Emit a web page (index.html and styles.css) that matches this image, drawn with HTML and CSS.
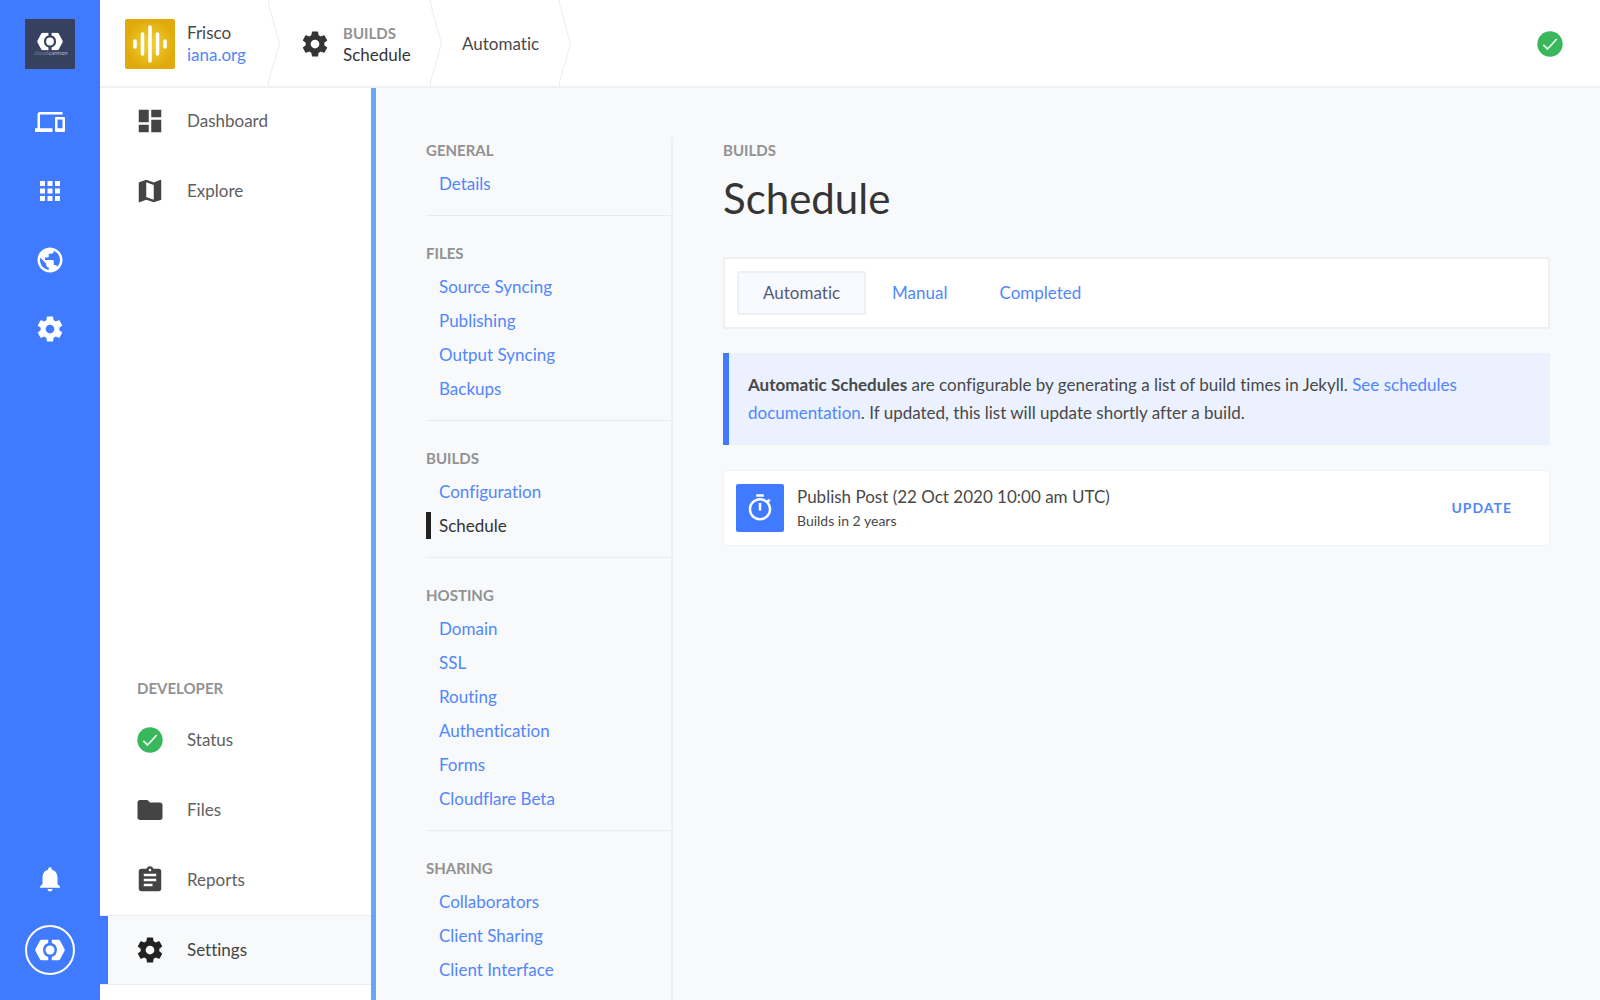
FILE: index.html
```html
<!DOCTYPE html>
<html lang="en">
<head>
<meta charset="utf-8">
<title>Schedule</title>
<link rel="stylesheet" href="styles.css">
</head>
<body>
<svg class="defs" aria-hidden="true">
  <symbol id="gear" viewBox="0 0 24 24"><path d="M19.43 12.98c.04-.32.07-.64.07-.98s-.03-.66-.07-.98l2.11-1.65c.19-.15.24-.42.12-.64l-2-3.46c-.12-.22-.39-.3-.61-.22l-2.49 1c-.52-.4-1.08-.73-1.69-.98l-.38-2.65C14.46 2.18 14.25 2 14 2h-4c-.25 0-.46.18-.49.42l-.38 2.65c-.61.25-1.17.59-1.69.98l-2.49-1c-.23-.09-.49 0-.61.22l-2 3.46c-.13.22-.07.49.12.64l2.11 1.65c-.04.32-.07.65-.07.98s.03.66.07.98l-2.11 1.65c-.19.15-.24.42-.12.64l2 3.46c.12.22.39.3.61.22l2.49-1c.52.4 1.08.73 1.69.98l.38 2.65c.03.24.24.42.49.42h4c.25 0 .46-.18.49-.42l.38-2.65c.61-.25 1.17-.59 1.69-.98l2.49 1c.23.09.49 0 .61-.22l2-3.46c.12-.22.07-.49-.12-.64l-2.11-1.65zM12 15.5c-1.93 0-3.5-1.57-3.5-3.5s1.57-3.5 3.5-3.5 3.5 1.57 3.5 3.5-1.57 3.5-3.5 3.5z"/></symbol>
  <symbol id="check" viewBox="0 0 30 30"><circle cx="15" cy="15" r="12.7" fill="#3ab75c"/><path d="M8.3 15.8l4.2 4.2 9.3-10" fill="none" stroke="#e4f7e8" stroke-width="1.8"/></symbol>
  <symbol id="cannon" viewBox="0 0 50 34"><path d="M11 0h11v5.500a12 12 0 0 0 0 23V34H11q-2 0-3-2L1 19q-1-2 0-4L8 2q1-2 3-2zM39 0H28v5.500a12 12 0 0 1 0 23V34h11q2 0 3-2l7-13q1-2 0-4L42 2q-1-2-3-2z"/><circle cx="25" cy="17" r="7.500"/></symbol>
</svg>
<div class="app">
  <nav class="rail" aria-label="Main">
    <a class="org" href="#" aria-label="Organisation">
      <svg viewBox="0 0 50 50"><use href="#cannon" x="12" y="13.500" width="26" height="18" fill="#fff"/><text x="9" y="36" font-size="6">cloud<tspan>cannon</tspan></text></svg>
    </a>
    <div class="rail-links">
      <a href="#" aria-label="Sites"><svg viewBox="0 0 24 24"><path d="M4 6h18V4H4c-1.100 0-2 .9-2 2v11H0v3h14v-3H4V6zm19 2h-6c-.55 0-1 .45-1 1v10c0 .55.45 1 1 1h6c.55 0 1-.45 1-1V9c0-.55-.45-1-1-1zm-1 9h-4v-7h4v7z"/></svg></a>
      <a href="#" aria-label="Apps"><svg viewBox="0 0 24 24"><path d="M4 8h4V4H4v4zm6 12h4v-4h-4v4zm-6 0h4v-4H4v4zm0-6h4v-4H4v4zm6 0h4v-4h-4v4zm6-10v4h4V4h-4zm-6 4h4V4h-4v4zm6 6h4v-4h-4v4zm0 6h4v-4h-4v4z"/></svg></a>
      <a href="#" aria-label="Domains"><svg viewBox="0 0 24 24"><path d="M12 2C6.480 2 2 6.480 2 12s4.480 10 10 10 10-4.480 10-10S17.520 2 12 2zm-1 17.930c-3.950-.49-7-3.850-7-7.930 0-.62.08-1.210.21-1.790L9 15v1c0 1.100.9 2 2 2v1.930zm6.900-2.540c-.26-.81-1-1.390-1.900-1.390h-1v-3c0-.55-.45-1-1-1H8v-2h2c.55 0 1-.45 1-1V7h2c1.100 0 2-.9 2-2v-.41c2.930 1.190 5 4.060 5 7.410 0 2.080-.8 3.970-2.100 5.390z"/></svg></a>
      <a href="#" aria-label="Preferences"><svg><use href="#gear"/></svg></a>
    </div>
    <div class="rail-foot">
      <a href="#" aria-label="Notifications"><svg viewBox="0 0 24 24"><path d="M12 22c1.100 0 2-.9 2-2h-4c0 1.100.89 2 2 2zm6-6v-5c0-3.070-1.640-5.640-4.500-6.320V4c0-.83-.67-1.500-1.500-1.500s-1.500.67-1.500 1.500v.68C7.630 5.360 6 7.920 6 11v5l-2 2v1h16v-1l-2-2z"/></svg></a>
      <a class="avatar" href="#" aria-label="Account"><svg><use href="#cannon"/></svg></a>
    </div>
  </nav>
  <header class="topbar">
    <div class="crumb site">
      <svg class="site-logo" viewBox="0 0 50 50"><defs><radialGradient id="gold"><stop offset="0" stop-color="#f2d233"/><stop offset="1" stop-color="#e0aa0c"/></radialGradient></defs><rect width="50" height="50" rx="2" fill="url(#gold)"/><path d="M10 22v6M17.500 15v20M25 8v34M32.500 15v20M40 22v6" stroke="#fff" stroke-width="3.600" stroke-linecap="round"/></svg>
      <div class="crumb-text"><span>Frisco</span><a href="#">iana.org</a></div>
    </div>
    <svg class="chevron" viewBox="0 0 12 86"><path d="M.5 0v4L11.500 43.500.5 82v4"/></svg>
    <div class="crumb section">
      <svg class="icon"><use href="#gear"/></svg>
      <div class="crumb-text"><span class="label">Builds</span><span>Schedule</span></div>
    </div>
    <svg class="chevron" viewBox="0 0 12 86"><path d="M.5 0v4L11.500 43.500.5 82v4"/></svg>
    <div class="crumb leaf">Automatic</div>
    <svg class="chevron" viewBox="0 0 12 86"><path d="M.5 0v4L11.500 43.500.5 82v4"/></svg>
    <svg class="icon state"><use href="#check"/></svg>
  </header>
  <nav class="side" aria-label="Site">
    <div class="side-top">
      <a href="#"><svg class="icon" viewBox="0 0 24 24"><path d="M3 13h8V3H3v10zm0 8h8v-6H3v6zm10 0h8V11h-8v10zm0-18v6h8V3h-8z"/></svg>Dashboard</a>
      <a href="#"><svg class="icon" viewBox="0 0 24 24"><path d="M20.500 3l-.16.030L15 5.100 9 3 3.360 4.900c-.21.070-.36.250-.36.480V20.500c0 .28.22.5.500.5l.16-.030L9 18.900l6 2.100 5.640-1.900c.21-.070.360-.250.360-.480V3.500c0-.28-.22-.5-.5-.5zM15 19l-6-2.110V5l6 2.110V19z"/></svg>Explore</a>
    </div>
    <div class="side-bottom">
      <h2 class="label">Developer</h2>
      <a href="#"><svg class="icon"><use href="#check"/></svg>Status</a>
      <a href="#"><svg class="icon" viewBox="0 0 24 24"><path d="M10 4H4c-1.100 0-1.990.9-1.990 2L2 18c0 1.100.9 2 2 2h16c1.100 0 2-.9 2-2V8c0-1.100-.9-2-2-2h-8l-2-2z"/></svg>Files</a>
      <a href="#"><svg class="icon" viewBox="0 0 24 24"><path d="M19 3h-4.180C14.400 1.840 13.300 1 12 1c-1.300 0-2.400.84-2.820 2H5c-1.100 0-2 .9-2 2v14c0 1.100.9 2 2 2h14c1.100 0 2-.9 2-2V5c0-1.100-.9-2-2-2zm-7 0c.55 0 1 .45 1 1s-.45 1-1 1-1-.45-1-1 .45-1 1-1zm2 14H7v-2h7v2zm3-4H7v-2h10v2zm0-4H7V7h10v2z"/></svg>Reports</a>
      <a class="current" href="#"><svg class="icon"><use href="#gear"/></svg>Settings</a>
    </div>
  </nav>
  <div class="page">
    <nav class="menu" aria-label="Settings">
      <section><h2 class="label">General</h2><a href="#">Details</a></section>
      <section><h2 class="label">Files</h2><a href="#">Source Syncing</a><a href="#">Publishing</a><a href="#">Output Syncing</a><a href="#">Backups</a></section>
      <section><h2 class="label">Builds</h2><a href="#">Configuration</a><a class="current" href="#">Schedule</a></section>
      <section><h2 class="label">Hosting</h2><a href="#">Domain</a><a href="#">SSL</a><a href="#">Routing</a><a href="#">Authentication</a><a href="#">Forms</a><a href="#">Cloudflare Beta</a></section>
      <section><h2 class="label">Sharing</h2><a href="#">Collaborators</a><a href="#">Client Sharing</a><a href="#">Client Interface</a></section>
    </nav>
    <main>
      <p class="label">Builds</p>
      <h1>Schedule</h1>
      <nav class="tabs" aria-label="Schedules"><a class="current" href="#">Automatic</a><a href="#">Manual</a><a href="#">Completed</a></nav>
      <p class="notice"><strong>Automatic Schedules</strong> are configurable by generating a list of build times in Jekyll. <a href="#">See schedules documentation</a>. If updated, this list will update shortly after a build.</p>
      <article class="card">
        <span class="badge"><svg class="icon" viewBox="0 0 24 24"><path d="M15 1H9v2h6V1zm-4 13h2V8h-2v6zm8.030-6.610l1.420-1.420c-.43-.51-.9-.99-1.410-1.410l-1.420 1.420C16.070 4.740 14.120 4 12 4c-4.970 0-9 4.030-9 9s4.020 9 9 9 9-4.030 9-9c0-2.120-.74-4.070-1.970-5.610zM12 20c-3.870 0-7-3.130-7-7s3.130-7 7-7 7 3.130 7 7-3.130 7-7 7z"/></svg></span>
        <div class="card-text"><h3>Publish Post (22 Oct 2020 10:00 am UTC)</h3><p>Builds in 2 years</p></div>
        <button type="button">UPDATE</button>
      </article>
    </main>
  </div>
</div>
</body>
</html>
```
FILE: styles.css
```css
* { box-sizing: border-box; margin: 0; }

body {
  background: #f8f9fb;
  color: #484848;
  font: 17px/22px Lato, "Open Sans", sans-serif;
  font-variant-ligatures: none;
}

a { color: #5286fb; text-decoration: none; }
svg { display: block; flex: none; }
.defs { position: absolute; width: 0; height: 0; }
.icon { width: 30px; height: 30px; fill: currentColor; }

.label {
  color: #929292;
  font-size: 15px;
  font-weight: 700;
  line-height: 26px;
  text-transform: uppercase;
}

.app {
  display: grid;
  grid-template: 88px 1fr / 100px 276px 1fr;
  height: 100vh;
}

/* Main rail */
.rail {
  grid-row: 1 / 3;
  display: flex;
  flex-direction: column;
  align-items: center;
  padding: 19px 0 25px;
  background: #407bff;
}
.rail a { display: block; }
.rail svg { width: 30px; height: 30px; fill: #fff; }
.org { background: #36405f; }
.rail .org svg { width: 50px; height: 50px; }
.org text { fill: #77809c; font-family: Lato, sans-serif; }
.org tspan { fill: #b4bacb; }
.rail-links { display: flex; flex-direction: column; gap: 39px; margin-top: 38px; }
.rail-foot {
  display: flex;
  flex-direction: column;
  align-items: center;
  gap: 31px;
  margin-top: auto;
}
.rail .avatar {
  display: grid;
  place-items: center;
  width: 50px;
  height: 50px;
  border: 2px solid #fff;
  border-radius: 50%;
}

/* Breadcrumbs */
.topbar {
  grid-column: 2 / 4;
  display: flex;
  padding: 0 35px 0 25px;
  border-bottom: 2px solid #f0f1f2;
  background: #fff;
}
.crumb { display: flex; align-items: center; padding-top: 2px; }
.crumb-text { display: flex; flex-direction: column; }
.crumb .label { line-height: 22px; }
.site { gap: 12px; width: 143px; }
.section { gap: 13px; width: 150px; padding-left: 20px; color: #353535; }
.leaf { width: 117px; padding-left: 20px; }
.site-logo { width: 50px; height: 50px; }
.chevron { width: 12px; height: 86px; fill: none; stroke: #ededed; }
.state { margin: 29px 0 auto auto; }

/* Site navigation */
.side {
  display: flex;
  flex-direction: column;
  justify-content: space-between;
  padding-bottom: 15px;
  border-right: 5px solid #69a5fa;
  background: #fff;
}
.side a {
  display: flex;
  align-items: center;
  gap: 22px;
  height: 70px;
  padding-left: 35px;
  color: #606060;
}
.side .icon { color: #444; }
.side-top { display: flex; flex-direction: column; gap: 4px; }
.side-top a { height: 66px; }
.side h2 { margin: 0 0 4px 37px; }
.side .current {
  border: solid #e9ebed;
  border-width: 1px 0;
  background: linear-gradient(to right, #407bff 8px, #f8f9fb 8px) border-box;
  color: #444;
}
.side .current .icon { color: #222; }

/* Settings page */
.page { display: flex; padding: 49px 50px 0; overflow: hidden; }
.menu { width: 247px; flex: none; border-right: 2px solid #edeff1; }
.menu section {
  display: flex;
  flex-direction: column;
  gap: 7px;
  padding: 24px 0 18px;
  border-bottom: 1px solid #e9ebed;
}
.menu section:first-child { padding-top: 0; }
.menu section:last-child { border-bottom: 0; }
.menu a { padding-left: 13px; line-height: 27px; }
.menu .current { padding-left: 8px; border-left: 5px solid #222; color: #333; }

main { flex: 1; min-width: 0; padding-left: 50px; }
h1 { margin: 10px 0 34px; color: #353535; font-size: 42px; font-weight: 400; line-height: 50px; }

.tabs {
  display: flex;
  padding: 12px;
  border: 2px solid #eff0f1;
  border-radius: 2px;
  background: #fff;
}
.tabs a { padding: 9px 24px; border: 2px solid transparent; border-radius: 2px; }
.tabs .current { border-color: #eff0f3; background: #f9faff; color: #505b79; }

.notice {
  margin: 24px 0 25px;
  padding: 18px 60px 18px 19px;
  border-left: 6px solid #407bff;
  background: #ebf1ff;
  line-height: 28px;
}

.card {
  display: flex;
  align-items: center;
  gap: 13px;
  padding: 13px 13px 13px 12px;
  border: 1px solid #f2f3f4;
  border-radius: 2px;
  background: #fff;
}
.badge {
  display: grid;
  place-items: center;
  width: 48px;
  height: 48px;
  border-radius: 2px;
  background: #407bff;
  color: #fff;
}
.card-text { flex: 1; }
h3 { font-size: 17px; font-weight: 400; line-height: 26px; }
.card p { font-size: 14px; line-height: 22px; }
.card button {
  padding: 8px 24px;
  border: 0;
  background: none;
  color: #5286fb;
  font: 700 14px/20px Lato, sans-serif;
  letter-spacing: 1px;
}
```
